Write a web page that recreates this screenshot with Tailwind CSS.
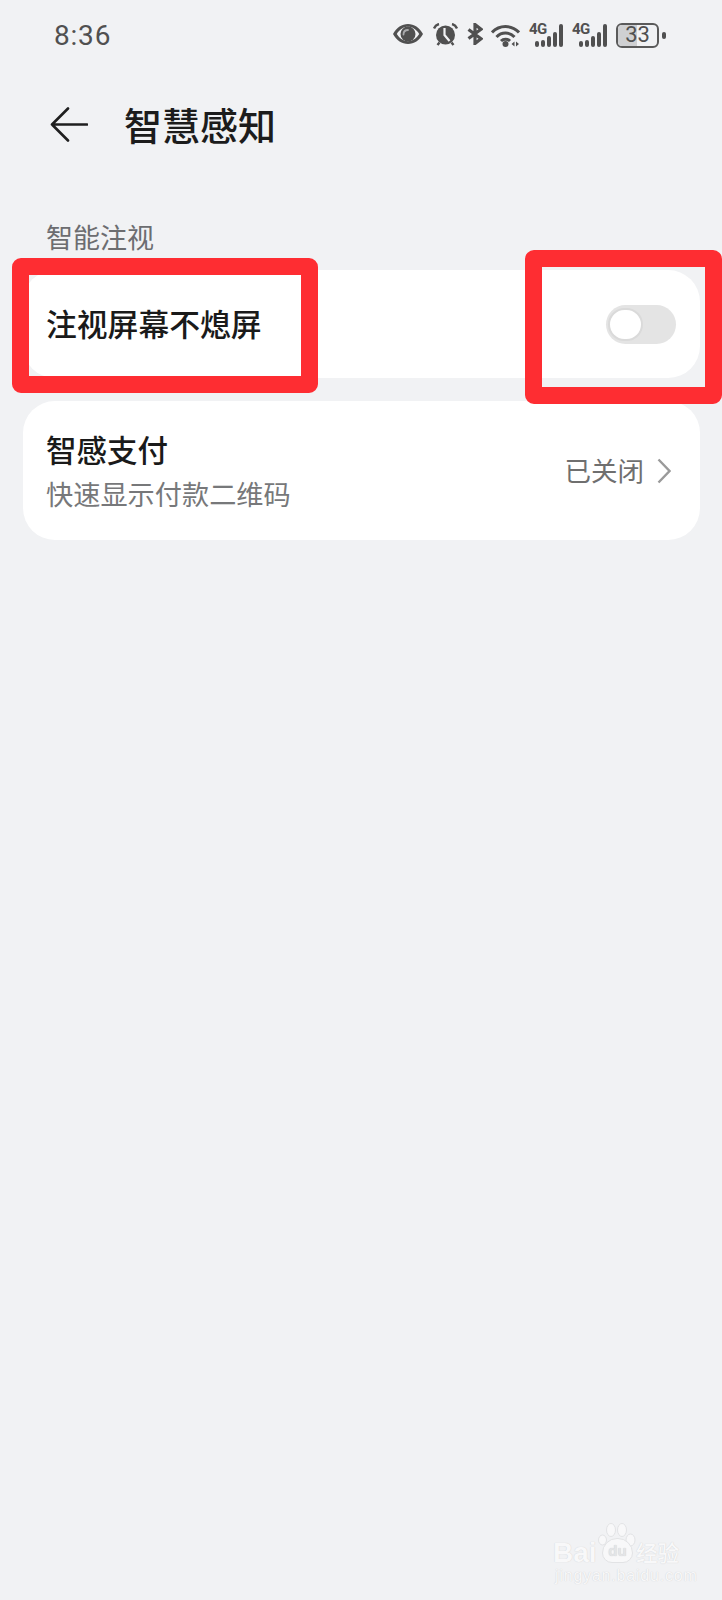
<!DOCTYPE html>
<html lang="zh-CN">
<head>
    <meta charset="UTF-8">
    <meta name="viewport" content="width=device-width, initial-scale=1.0">
    <title>智慧感知</title>
    <script src="https://cdn.jsdelivr.net/npm/@tailwindcss/browser@4"></script>
</head>
<body class="bg-[#f1f2f4] font-['Noto_Sans_CJK_SC','Noto_Sans',sans-serif]">
    <div class="relative w-[722px] h-[1600px] overflow-hidden">

        <!-- Status bar -->
        <div class="h-[70px] flex items-center pl-[54px] text-[#505050]">
            <span class="pt-[2px] font-['Roboto',sans-serif] text-[28px] leading-none tracking-[0.8px]">8:36</span>
            <div class="ml-auto mr-[56px] flex items-center">
                <!-- eye -->
                <svg class="mb-[2px] w-[30px] h-[20px]" viewBox="0 0 30 20">
                    <path fill="#505050" fill-rule="evenodd" d="M0 10C3.500 3.500 9 0 15 0S26.500 3.500 30 10C26.500 16.500 21 20 15 20S3.500 16.500 0 10ZM3.800 10C6.500 14.500 10.500 17.200 15 17.200S23.500 14.500 26.200 10C23.500 5.500 19.500 2.800 15 2.800S6.500 5.500 3.800 10Z"/>
                    <circle cx="15" cy="10" r="7.500" fill="#505050"/>
                    <path d="M10.500 10.500C10.500 7.500 12.500 6 15 6" fill="none" stroke="#a9aaac" stroke-width="1.800" stroke-linecap="round"/>
                </svg>
                <!-- alarm -->
                <svg class="mb-[2px] ml-[10px] w-[25px] h-[23px]" viewBox="0 0 25 23">
                    <circle cx="12.500" cy="12" r="9.500" fill="#505050"/>
                    <path d="M11.500 5V12L16.500 18" fill="none" stroke="#f1f2f4" stroke-width="2.200"/>
                    <path d="M1 5.500C2 3 4 1.500 6 1M24 5.500C23 3 21 1.500 19 1M6.500 19.500L4.500 22M18.500 19.500L20.500 22" fill="none" stroke="#505050" stroke-width="2.400"/>
                </svg>
                <!-- bluetooth -->
                <svg class="mb-[2px] ml-[9px] w-[16px] h-[22px]" viewBox="0 0 16 22">
                    <path d="M1.500 6.500L14 15.800L8 20.500V1.500L14 6.200L1.500 15.500" fill="none" stroke="#505050" stroke-width="3.200"/>
                </svg>
                <!-- wifi -->
                <svg class="ml-[8px] w-[29px] h-[23px]" viewBox="0 0 29 23">
                    <path d="M1 8.500C8.500 0.500 20.500 0.500 28 8.500M5.500 13C10.500 7.800 18.500 7.800 23.500 13M10 17C12.500 14.500 16.500 14.500 19 17" fill="none" stroke="#505050" stroke-width="3"/>
                    <circle cx="14.500" cy="20" r="3" fill="#505050"/>
                    <path d="M23.500 17.500V22.500L20.500 20ZM25 17.500V22.500L28 20Z" fill="#505050"/>
                </svg>
                <!-- 4G signal x2 -->
                <div class="ml-[9px] relative w-[34px] h-[24px]">
                    <span class="absolute left-0 top-[-1px] font-['Roboto',sans-serif] font-bold text-[15px] leading-[15px] tracking-[-0.5px]">4G</span>
                    <div class="absolute inset-x-0 bottom-0 flex items-end justify-end gap-[2px]">
                        <i class="block w-[4px] h-[6px] bg-[#505050] rounded-[2px]"></i>
                        <i class="block w-[4px] h-[7px] bg-[#505050] rounded-[2px]"></i>
                        <i class="block w-[4px] h-[11px] bg-[#505050] rounded-[2px]"></i>
                        <i class="block w-[4px] h-[15px] bg-[#505050] rounded-[2px]"></i>
                        <i class="block w-[4px] h-[23px] bg-[#505050] rounded-[2px]"></i>
                    </div>
                </div>
                <div class="ml-[9px] relative w-[35px] h-[24px]">
                    <span class="absolute left-0 top-[-1px] font-['Roboto',sans-serif] font-bold text-[15px] leading-[15px] tracking-[-0.5px]">4G</span>
                    <div class="absolute inset-x-0 bottom-0 flex items-end justify-end gap-[2px]">
                        <i class="block w-[4px] h-[6px] bg-[#505050] rounded-[2px]"></i>
                        <i class="block w-[4px] h-[7px] bg-[#505050] rounded-[2px]"></i>
                        <i class="block w-[4px] h-[11px] bg-[#505050] rounded-[2px]"></i>
                        <i class="block w-[4px] h-[15px] bg-[#505050] rounded-[2px]"></i>
                        <i class="block w-[4px] h-[23px] bg-[#505050] rounded-[2px]"></i>
                    </div>
                </div>
                <!-- battery -->
                <div class="ml-[9px] relative w-[43px] h-[25px] rounded-[6px] border-2 border-[#5a5a5a] overflow-hidden flex items-center justify-center">
                    <div class="absolute inset-y-0 left-0 w-[19px] bg-[#cfd0d2]"></div>
                    <span class="relative font-['Roboto',sans-serif] text-[22px] leading-none">33</span>
                </div>
                <div class="ml-[3px] w-[4px] h-[7px] rounded-[2px] bg-[#505050]"></div>
            </div>
        </div>

        <!-- Header -->
        <div class="h-[108px] flex items-center pl-[50px]">
            <svg class="w-[38px] h-[35px]" viewBox="0 0 38 35">
                <path d="M18 1.500L2 17.500L18 33.500M2 17.500H37" fill="none" stroke="#1f1f1f" stroke-width="2.600" stroke-linecap="round" stroke-linejoin="round"/>
            </svg>
            <h1 class="ml-[36px] text-[38px] leading-none font-medium text-[#1c1c1c]">智慧感知</h1>
        </div>

        <!-- Section label -->
        <div class="mt-[42px] pl-[46px] text-[27px] leading-[34px] text-[#6c6d70]">智能注视</div>

        <!-- Cards -->
        <div class="mt-[16px] mx-[23px] w-[677px] h-[108px] bg-white rounded-[32px] flex items-center justify-between pl-[23px] pr-[24px]">
            <span class="pb-[2px] text-[30.800px] leading-none font-medium text-[#1a1a1a]">注视屏幕不熄屏</span>
            <div class="relative w-[70px] h-[39px] rounded-full bg-[#e4e4e4]">
                <div class="absolute left-[2px] top-[3px] w-[35px] h-[33px] rounded-full bg-white border-2 border-[#dadada]"></div>
            </div>
        </div>

        <div class="mt-[23px] mx-[23px] w-[677px] h-[139px] bg-white rounded-[32px] flex items-center justify-between pl-[23px] pr-[29px]">
            <div>
                <div class="text-[30.500px] leading-[40px] font-medium text-[#1a1a1a]">智感支付</div>
                <div class="mt-[4px] text-[27.200px] leading-[40px] text-[#77787a]">快速显示付款二维码</div>
            </div>
            <div class="flex items-center">
                <span class="text-[26.500px] leading-none text-[#6f6f6f]">已关闭</span>
                <svg class="ml-[13px] w-[14px] h-[26px]" viewBox="0 0 14 26">
                    <path d="M1.500 1.500L12.500 13L1.500 24.500" fill="none" stroke="#9a9a9a" stroke-width="2.400"/>
                </svg>
            </div>
        </div>

        <!-- Red annotation boxes -->
        <div class="absolute left-[12px] top-[258px] w-[306px] h-[135px] border-[17px] border-[#fe2d32] rounded-[9px]"></div>
        <div class="absolute left-[525px] top-[250px] w-[197px] h-[154px] border-[17px] border-[#fe2d32] rounded-[9px]"></div>

        <!-- Baidu watermark -->
        <div class="absolute left-[553px] top-[1520px] w-[160px] h-[70px] text-[#f8f8f9] [text-shadow:0_0_1px_#c8c9cb]">
            <svg class="absolute left-[45px] top-[3px] w-[38px] h-[30px]" viewBox="0 0 38 30">
                <ellipse cx="4.500" cy="17" rx="4" ry="5" fill="#f8f8f9" stroke="#e2e3e5"/>
                <ellipse cx="13" cy="7" rx="4.500" ry="6.500" fill="#f8f8f9" stroke="#e2e3e5"/>
                <ellipse cx="24" cy="7" rx="4.500" ry="6.500" fill="#f8f8f9" stroke="#e2e3e5"/>
                <ellipse cx="32.500" cy="17" rx="4.500" ry="6" fill="#f8f8f9" stroke="#e2e3e5"/>
            </svg>
            <span class="absolute left-0 top-[19px] font-['Liberation_Sans',sans-serif] font-bold text-[28px] leading-none">Bai</span>
            <div class="absolute left-[49px] top-[18px] w-[31px] h-[25px] rounded-t-[15px] rounded-b-[10px] bg-[#f8f8f9] border border-[#e2e3e5] flex items-center justify-center">
                <span class="font-['Liberation_Sans',sans-serif] font-bold text-[15px] leading-none text-[#e4e5e7]">du</span>
            </div>
            <span class="absolute left-[83px] top-[17px] text-[21.500px] leading-[30px] font-medium">经验</span>
            <span class="absolute left-[2px] top-[46px] font-['Liberation_Sans',sans-serif] text-[16px] leading-[20px] tracking-[0.8px]">jingyan.baidu.com</span>
        </div>
    </div>
</body>
</html>
